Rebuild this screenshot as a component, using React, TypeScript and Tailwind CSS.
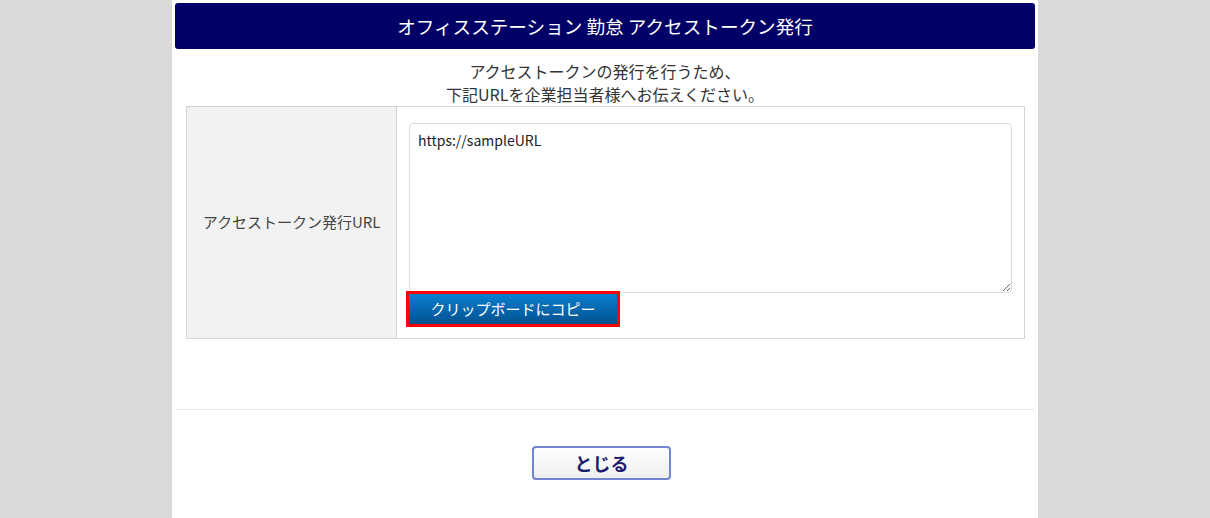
export default function App() {
  return (
    <div
      className="min-h-[518px] w-full bg-[#d9d9d9]"
      style={{ fontFamily: '"Noto Sans CJK JP", "Noto Sans", sans-serif' }}
    >
      <div className="mx-auto min-h-[518px] w-[866px] bg-white pt-[3px]">
        <div className="mx-[3px] flex h-[46px] items-center justify-center rounded-[3px] bg-[#000066] text-[18.6px] text-white">
          オフィスステーション 勤怠 アクセストークン発行
        </div>

        <div className="pt-[11px] text-center text-[16px] leading-[23px] text-[#333333]">
          <p>アクセストークンの発行を行うため、</p>
          <p>下記URLを企業担当者様へお伝えください。</p>
        </div>

        <div className="ml-[14px] mr-[13px] flex h-[233px] border border-[#d4d4d4]">
          <div className="flex w-[210px] shrink-0 items-center justify-center border-r border-[#d4d4d4] bg-[#f2f2f2] text-[15px] text-[#444444]">
            アクセストークン発行URL
          </div>
          <div className="flex flex-1 flex-col pl-[12px] pr-[12px] pt-[16px]">
            <textarea
              readOnly
              value="https://sampleURL"
              className="h-[170px] w-full rounded-[4px] border border-[#dcdcdc] px-[8px] py-[6px] text-[14px] text-[#222222] outline-none"
            />
            <div className="-ml-[3px] -mt-[2px] w-[214px] border-[3px] border-[#ff0000]">
              <button className="flex h-[30px] w-full items-center justify-center bg-gradient-to-b from-[#0a7fd0] to-[#03528f] text-[15px] text-white">
                クリップボードにコピー
              </button>
            </div>
          </div>
        </div>

        <div className="mx-[4px] mt-[70px] border-t border-[#e6e6e6]" />

        <div className="flex justify-center pt-[36px]">
          <button className="mr-[7px] h-[34px] w-[139px] rounded-[4px] border-2 border-[#7384d0] bg-gradient-to-b from-white to-[#eeeeee] text-[18px] font-bold text-[#1c1c6e]">
            とじる
          </button>
        </div>
      </div>
    </div>
  )
}
